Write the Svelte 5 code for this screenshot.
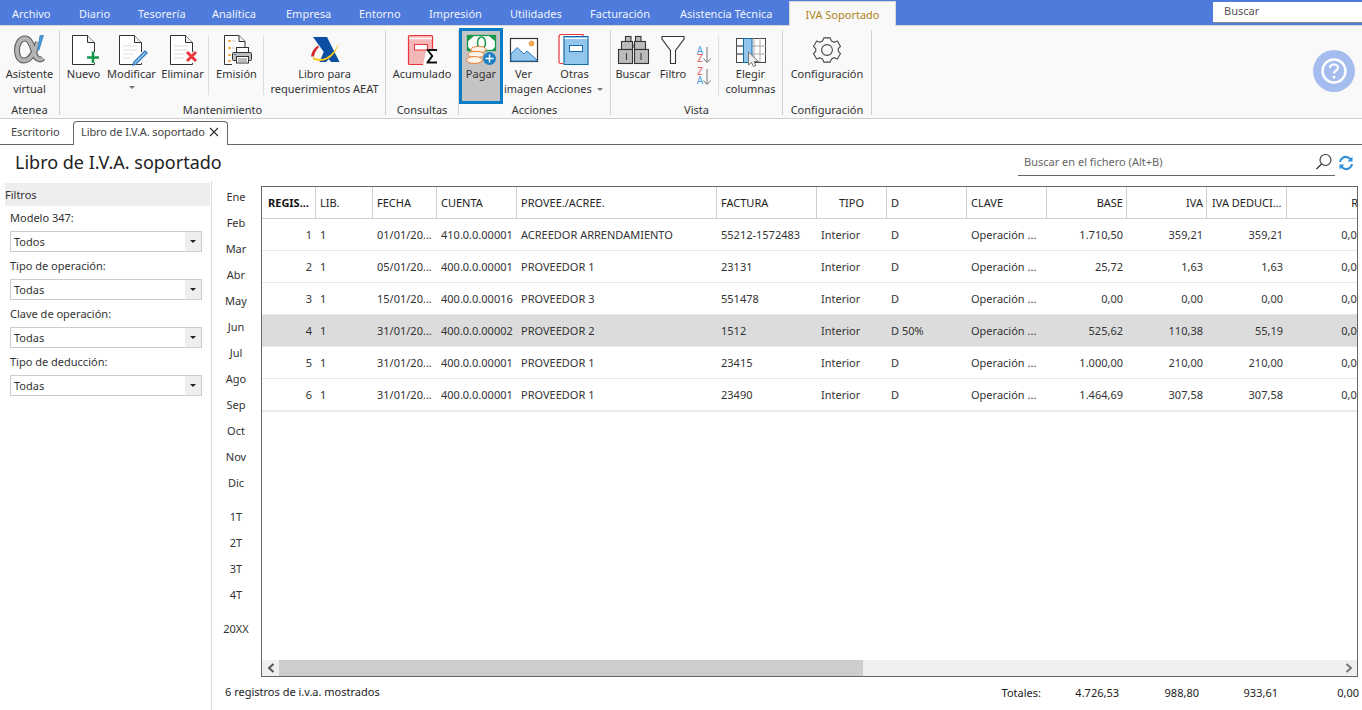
<script>
  const topTabs = [
    ['Archivo', 67], ['Diario', 59], ['Tesorería', 74], ['Analítica', 74], ['Empresa', 73], ['Entorno', 70],
    ['Impresión', 81], ['Utilidades', 80], ['Facturación', 90], ['Asistencia Técnica', 109]
  ];
  const months = ['Ene','Feb','Mar','Abr','May','Jun','Jul','Ago','Sep','Oct','Nov','Dic'];
  const quarters = ['1T','2T','3T','4T'];
  const filters = [['Modelo 347:','Todos'],['Tipo de operación:','Todas'],['Clave de operación:','Todas'],['Tipo de deducción:','Todas']];
  const cols = [
    ['REGIS...','bold'],['LIB.',''],['FECHA',''],['CUENTA',''],['PROVEE./ACREE.',''],['FACTURA',''],['TIPO','center'],
    ['D',''],['CLAVE',''],['BASE','right'],['IVA','right'],['IVA DEDUCI...','ded'],['R','right lastcol']
  ];
  const rows = [
    ['1','1','01/01/20...','410.0.0.00001','ACREEDOR ARRENDAMIENTO','55212-1572483','Interior','D','Operación ...','1.710,50','359,21','359,21','0,00'],
    ['2','1','05/01/20...','400.0.0.00001','PROVEEDOR 1','23131','Interior','D','Operación ...','25,72','1,63','1,63','0,00'],
    ['3','1','15/01/20...','400.0.0.00016','PROVEEDOR 3','551478','Interior','D','Operación ...','0,00','0,00','0,00','0,00'],
    ['4','1','31/01/20...','400.0.0.00002','PROVEEDOR 2','1512','Interior','D 50%','Operación ...','525,62','110,38','55,19','0,00'],
    ['5','1','31/01/20...','400.0.0.00001','PROVEEDOR 1','23415','Interior','D','Operación ...','1.000,00','210,00','210,00','0,00'],
    ['6','1','31/01/20...','400.0.0.00001','PROVEEDOR 1','23490','Interior','D','Operación ...','1.464,69','307,58','307,58','0,00']
  ];
  const numeric = [0, 9, 10, 11, 12];
  const alpha = 'M36 42C33 52 28 60.500 22 60.500C16 60.500 15 54 15 50C15 44 18 38.500 23 38.500C30 38.500 31 52 34 57C36 60 39 60 41 58';
</script>

{#snippet doc(x)}
  <path d="M{x+22} 52V42.500L{x+15} 35.500H{x}V64.500H{x+22}V63" fill="#fff" stroke="#333" stroke-width="1"/>
  <path d="M{x+15} 35.500V42.500H{x+22}" fill="#eee" stroke="#333" stroke-width="1"/>
{/snippet}

<div class="app">
  <header class="menubar">
    {#each topTabs as [label, w]}
      <div class="menutab" style="width:{w}px">{label}</div>
    {/each}
    <div class="menutab active">IVA Soportado</div>
    <div class="globalsearch">Buscar</div>
  </header>

  <section class="ribbon">
    <div class="group g-atenea">
      <div class="items">
        <div class="item w59">
          <svg width="46" height="36" viewBox="5 31 46 36">
            <path d={alpha} fill="none" stroke="#5f5f5f" stroke-width="6"/>
            <path d={alpha} fill="none" stroke="#b4b4b4" stroke-width="3.800"/>
            <path d="M38 35.500H41.500L37 50H35.500Z" fill="#4d9bdc" stroke="#2f7fc0" stroke-width=".7"/>
          </svg>
          <span>Asistente<br/>virtual</span>
        </div>
      </div>
      <div class="grouplabel">Atenea</div>
    </div>

    <div class="group g-mant">
      <div class="items">
        <div class="item w47">
          <svg width="46" height="36" viewBox="60 31 46 36">
            {@render doc(71.5)}
            <path d="M92 51.500V63M86 57.500H98" stroke="#16994a" stroke-width="2.600"/>
          </svg>
          <span>Nuevo</span>
        </div>
        <div class="item w49">
          <svg width="46" height="36" viewBox="108 31 46 36">
            {@render doc(118.500)}
            <path d="M122 46H136M122 50H136M122 54H133M122 58H129" stroke="#ddd"/>
            <path d="M133 62L132 65L135 64L146 53L144 51Z" fill="#9cc8ec" stroke="#2b7cc0" stroke-width="1.300"/>
          </svg>
          <span>Modificar</span>
          <i class="caret"></i>
        </div>
        <div class="item w52 sep">
          <svg width="46" height="36" viewBox="159 31 46 36">
            {@render doc(169.500)}
            <path d="M173 46H187M173 50H187M173 54H183M173 58H183" stroke="#ddd"/>
            <path d="M186 52L195 61M195 52L186 61" stroke="#e8383d" stroke-width="3"/>
          </svg>
          <span>Eliminar</span>
        </div>
        <div class="item w55 sep">
          <svg width="46" height="36" viewBox="214 31 46 36">
            <path d="M245 47V41.500L239 35.500H224.500V64.500H232" fill="#fff" stroke="#333"/>
            <path d="M239 35.500V41.500H245" fill="#eee" stroke="#333"/>
            <path d="M228 41H231M228 48H231M228 55H231M228 61H231" stroke="#f09a28" stroke-width="1.300"/>
            <path d="M232 41H236M232 48H235M232 55H234" stroke="#ccc"/>
            <rect x="236.500" y="47.500" width="12" height="6" fill="#fff" stroke="#333"/>
            <rect x="232.500" y="52.500" width="19" height="8" rx="1" fill="#bcbcbc" stroke="#333"/>
            <rect x="236.500" y="56.500" width="12" height="6.500" fill="#fff" stroke="#333"/>
            <path d="M234 54.500H236" stroke="#2b7cc0"/>
            <path d="M238 59H247M238 61H247" stroke="#555" stroke-width=".8"/>
          </svg>
          <span>Emisión</span>
        </div>
        <div class="item grow">
          <svg width="46" height="36" viewBox="302 31 46 36">
            <path d="M313 37H327L339.500 62H331Z" fill="#0b4ea2"/>
            <path d="M325 49L319.500 62H326L331 57Z" fill="#0b4ea2"/>
            <path d="M313 57C322 62 333 57 338.500 43C337 53 328 65 313 59.500Z" fill="#f5c518"/>
            <path d="M311 56.500C311.500 52 314 48 318 45.500L319 47C316 50 314.500 53 314 56.500Z" fill="#d8232a"/>
          </svg>
          <span>Libro para<br/>requerimientos AEAT</span>
        </div>
      </div>
      <div class="grouplabel">Mantenimiento</div>
    </div>

    <div class="group g-cons">
      <div class="items">
        <div class="item grow">
          <svg width="46" height="36" viewBox="399 31 46 36">
            <rect x="408.500" y="35.500" width="24" height="29" rx="1" fill="#f4b6b6" stroke="#e8343a" stroke-width="1.200"/>
            <path d="M409 38.500H432" stroke="#fff" stroke-width="1.500"/>
            <rect x="414.500" y="44.500" width="13" height="5.500" fill="#fff" stroke="#e8343a"/>
            <path d="M426 51H434V65H423Z" fill="#fff"/>
            <path d="M427 49H437V51H429.500L433.500 56L429.500 61.500H437V63.500H426.500V62L431 56L426.500 50Z" fill="#111"/>
          </svg>
          <span>Acumulado</span>
        </div>
      </div>
      <div class="grouplabel">Consultas</div>
    </div>

    <div class="group g-acc">
      <div class="items">
        <div class="item selected">
          <svg width="38" height="36" viewBox="463 31 38 36">
            <rect x="468.500" y="35.500" width="28" height="15" fill="#fff" stroke="#16994a" stroke-width="1.300"/>
            <path d="M468 36H475L468 42ZM497 36H490L497 42ZM468 51H473L468 46ZM497 51H492L497 46Z" fill="#16994a"/>
            <ellipse cx="482.500" cy="43" rx="4" ry="6" fill="none" stroke="#16994a" stroke-width="1.500"/>
            <ellipse cx="479.500" cy="49.500" rx="7.500" ry="3.200" fill="#fdf3ea" stroke="#ea7f30"/>
            <ellipse cx="477" cy="54.500" rx="8" ry="3.200" fill="#fdf3ea" stroke="#ea7f30"/>
            <ellipse cx="475.500" cy="60" rx="8" ry="3.500" fill="#fdf3ea" stroke="#ea7f30"/>
            <circle cx="490.500" cy="58.500" r="6.500" fill="#1f7fc4"/>
            <path d="M490.500 54.500V62.500M486.500 58.500H494.500" stroke="#fff" stroke-width="1.400"/>
          </svg>
          <span>Pagar</span>
        </div>
        <div class="item w41">
          <svg width="34" height="36" viewBox="506 31 34 36">
            <rect x="509.500" y="38.500" width="27" height="23" fill="#fff" stroke="#333" stroke-width="1.200"/>
            <path d="M510 54L516 47.500L523 54L526 51L536 60V61H510Z" fill="#93c6ec" stroke="#2b7cc0" stroke-width="1"/>
            <circle cx="530.500" cy="43.500" r="2.500" fill="#f3b05a" stroke="#e98a2b" stroke-width=".7"/>
          </svg>
          <span>Ver<br/>imagen</span>
        </div>
        <div class="item w57 otras">
          <svg width="46" height="36" viewBox="552 31 46 36">
            <path d="M561 34.500H583V38M561 34.500C559.500 34.500 559 36 559 37V62C559 63 560 63.500 561 63.500H563" fill="#fff" stroke="#e8343a" stroke-width="1.200"/>
            <path d="M564 36.500H588V64.500H564Z" fill="#93c6ec" stroke="#156ca8" stroke-width="1.200"/>
            <path d="M564.500 38.500H587.500" stroke="#fff" stroke-width="1"/>
            <rect x="569.500" y="45.500" width="13" height="6" fill="#fff" stroke="#156ca8"/>
          </svg>
          <span>Otras<br/>Acciones <i class="caret inline"></i></span>
        </div>
      </div>
      <div class="grouplabel">Acciones</div>
    </div>

    <div class="group g-vista">
      <div class="items">
        <div class="item w44">
          <svg width="40" height="36" viewBox="614 31 40 36">
            <g fill="#bcbcbc" stroke="#333" stroke-width="1.100">
              <rect x="626.500" y="36.500" width="5.500" height="5"/>
              <rect x="636.500" y="36.500" width="5.500" height="5"/>
              <rect x="622.500" y="41.500" width="11" height="8"/>
              <rect x="635.500" y="41.500" width="11" height="8"/>
              <rect x="619.500" y="49.500" width="14" height="14"/>
              <rect x="635.500" y="49.500" width="14" height="14"/>
            </g>
            <path d="M633 45H636M633 47H636" stroke="#333"/>
            <path d="M627.500 53V60M642 53V60" stroke="#333"/>
          </svg>
          <span>Buscar</span>
        </div>
        <div class="item w36">
          <svg width="34" height="36" viewBox="656 31 34 36">
            <path d="M662 36.500H684V39L675.500 50.500V63.500H670.500V50.500L662 39Z" fill="#fff" stroke="#333" stroke-width="1.100"/>
          </svg>
          <span>Filtro</span>
        </div>
        <div class="item sortitem sep">
          <svg width="26" height="46" viewBox="691 40 26 46">
            <text x="699" y="53.500" class="az blue">A</text>
            <text x="699" y="62" class="az red">Z</text>
            <path d="M706 47V62M702.500 58.500L706 62.500L709.500 58.500" fill="none" stroke="#777"/>
            <text x="699" y="75" class="az red">Z</text>
            <text x="699" y="83.500" class="az blue">A</text>
            <path d="M706 69V84M702.500 80.500L706 84.500L709.500 80.500" fill="none" stroke="#777"/>
          </svg>
        </div>
        <div class="item grow">
          <svg width="46" height="36" viewBox="727 31 46 36">
            <rect x="735.500" y="38.500" width="29" height="24" fill="#fff" stroke="#444"/>
            <path d="M735 46H765M735 54H765M759 38V62M753 38V62" stroke="#aaa"/>
            <path d="M735 46H743M735 54H743" stroke="#444"/>
            <rect x="742.500" y="38.500" width="8.500" height="24" fill="#93c6ec" stroke="#156ca8"/>
            <path d="M747.500 52V65L750.500 62.500L752.500 66.500L755 65.500L753 61.500H757.500Z" fill="#eee" stroke="#777"/>
          </svg>
          <span>Elegir<br/>columnas</span>
        </div>
      </div>
      <div class="grouplabel">Vista</div>
    </div>

    <div class="group g-conf">
      <div class="items">
        <div class="item grow">
          <svg width="46" height="36" viewBox="804 31 46 36">
            <g transform="translate(827 50) scale(.9) translate(-827 -51)">
              <path d="M823.500 37.500H830.500L832 41L835 42.500L838.500 41L842 47L839.500 49.500V52.500L842 55L838.500 61L835 59.500L832 61L830.500 64.500H823.500L822 61L819 59.500L815.500 61L812 55L814.500 52.500V49.500L812 47L815.500 41L819 42.500L822 41Z" fill="none" stroke="#444" stroke-width="1.200" stroke-linejoin="round"/>
              <circle cx="827" cy="51" r="6" fill="none" stroke="#444" stroke-width="1.200"/>
            </g>
          </svg>
          <span>Configuración</span>
        </div>
      </div>
      <div class="grouplabel">Configuración</div>
    </div>

    <div class="help">
      <svg width="42" height="42" viewBox="0 0 42 42">
        <circle cx="21" cy="21" r="21" fill="#a5bdee"/>
        <circle cx="21" cy="21" r="11.500" fill="none" stroke="#fff" stroke-width="2.400"/>
        <path d="M17 18C17 15.500 19 14.500 21 14.500C23 14.500 25 15.700 25 18C25 20.500 21 20.800 21 23.500" fill="none" stroke="#fff" stroke-width="2.200"/>
        <circle cx="21" cy="27" r="1.500" fill="#fff"/>
      </svg>
    </div>
  </section>

  <nav class="doctabs">
    <div class="doctab">Escritorio</div>
    <div class="doctab current">
      Libro de I.V.A. soportado
      <svg width="10" height="10" viewBox="0 0 10 10"><path d="M1 1L9 9M9 1L1 9" stroke="#333" stroke-width="1.200"/></svg>
    </div>
  </nav>

  <div class="titlerow">
    <h1>Libro de I.V.A. soportado</h1>
    <div class="filesearch">
      <span>Buscar en el fichero (Alt+B)</span>
      <svg width="18" height="18" viewBox="0 0 18 18"><circle cx="10.500" cy="7" r="5.500" fill="none" stroke="#333" stroke-width="1.100"/><path d="M6.500 11L1.500 16" stroke="#333" stroke-width="1.300"/></svg>
    </div>
    <svg class="refresh" width="16" height="16" viewBox="0 0 16 16">
      <path d="M2 7C2.500 3.500 6 1 9.500 2.200C11 2.700 12 3.600 12.800 4.500M14 9C13.500 12.500 10 15 6.500 13.800C5 13.300 4 12.400 3.200 11.500" fill="none" stroke="#2f8fd8" stroke-width="2"/>
      <path d="M14.500 1.500V6.500H9.500ZM1.500 14.500V9.500H6.500Z" fill="#2f8fd8"/>
    </svg>
  </div>

  <main class="body">
    <aside class="filters">
      <div class="filtershead">Filtros</div>
      {#each filters as [label, value]}
        <div class="flabel">{label}</div>
        <div class="combo">
          <span>{value}</span>
          <b><i></i></b>
        </div>
      {/each}
    </aside>

    <div class="periods">
      <div class="plist">
        {#each months as m}<div>{m}</div>{/each}
      </div>
      <div class="plist q">
        {#each quarters as m}<div>{m}</div>{/each}
      </div>
      <div class="year">20XX</div>
    </div>

    <div class="content">
      <div class="grid">
        <div class="table">
          <div class="tr head">
            {#each cols as [label, kind]}
              <div class="th {kind}">{label}</div>
            {/each}
          </div>
          {#each rows as row, r}
            <div class="tr" class:sel={r === 3} class:last={r === 5}>
              {#each row as value, c}
                <div class="td" class:num={numeric.includes(c)}>{value}</div>
              {/each}
            </div>
          {/each}
        </div>
        <div class="hscroll">
          <div class="arrow">
            <svg width="8" height="10" viewBox="0 0 8 10"><path d="M6.500 1L2 5L6.500 9" fill="none" stroke="#555" stroke-width="2"/></svg>
          </div>
          <div class="thumb"></div>
          <div class="track"></div>
          <div class="arrow">
            <svg width="8" height="10" viewBox="0 0 8 10"><path d="M1.500 1L6 5L1.500 9" fill="none" stroke="#777" stroke-width="2"/></svg>
          </div>
        </div>
      </div>
      <div class="status">
        <div class="count">6 registros de i.v.a. mostrados</div>
        <div class="tot label">Totales:</div>
        <div class="tot v1">4.726,53</div>
        <div class="tot v2">988,80</div>
        <div class="tot v3">933,61</div>
        <div class="tot v4">0,00</div>
      </div>
    </div>
  </main>
</div>

<style>
  :global(body) { margin: 0; background: #fff; }
  .app {
    width: 1362px; height: 710px; overflow: hidden; display: flex; flex-direction: column;
    font-family: "Noto Sans", "Open Sans", sans-serif; font-size: 11px; color: #333;
  }
  .menubar { height: 25px; flex: none; display: flex; background: #4e7bdc; border-bottom: 1px solid #d8d8d8; padding-left: 12px; }
  .menutab { height: 25px; line-height: 28px; color: #fff; opacity: .92; flex: none; white-space: nowrap; }
  .menutab.active {
    width: 107px; margin-top: 1px; height: 25px; line-height: 26px; opacity: 1; text-align: center;
    background: #f9f9f9; color: #b08320; box-sizing: border-box; border: 1px solid #d8d8d8; border-bottom: 0;
  }
  .globalsearch {
    margin: 2px 0 0 auto; width: 149px; height: 21px; background: #fff; box-sizing: border-box;
    border-bottom: 1px solid #888; padding-left: 11px; line-height: 18px; color: #555;
  }

  .ribbon { height: 92px; flex: none; display: flex; background: #f9f9f9; border-bottom: 1px solid #cfcfcf; position: relative; }
  .group { height: 85px; margin-top: 4px; display: flex; flex-direction: column; border-right: 1px solid #d2d2d2; flex: none; box-sizing: border-box; }
  .g-atenea { width: 60px; }
  .g-mant { width: 326px; }
  .g-cons { width: 73px; }
  .g-acc { width: 152px; }
  .g-vista { width: 172px; }
  .g-conf { width: 89px; }
  .items { height: 72px; display: flex; flex: none; }
  .grouplabel { text-align: center; line-height: 14px; margin-top: 1px; color: #333; }
  .item { display: flex; flex-direction: column; align-items: center; text-align: center; line-height: 15px; flex: none; position: relative; }
  .item svg { display: block; flex: none; margin-top: 1px; margin-bottom: -1px; }
  .item span { white-space: nowrap; }
  .grow { flex: 1; }
  .w59 { width: 59px; }
  .w47 { width: 47px; }
  .w49 { width: 49px; }
  .w52 { width: 53px; }
  .w55 { width: 55px; }
  .w41 { width: 41px; }
  .w57 { width: 57px; }
  .w44 { width: 44px; }
  .w36 { width: 36px; }
  .sep::after { content: ""; position: absolute; right: 0; top: 6px; height: 59px; border-right: 1px solid #ddd; }
  .otras { margin-left: 2px; }
  .selected {
    width: 44px; height: 76px; margin-top: -2px; background: #c4c4c4; box-sizing: border-box;
    border: 3px solid #0a7cc4;
  }
  .selected svg { margin-top: 0; }
  .sortitem { width: 28px; }
  .sortitem svg { margin-top: 10px; }
  .az { font-size: 10px; text-anchor: middle; }
  .blue { fill: #4f9ee0; }
  .red { fill: #e8585c; }
  .caret { display: block; width: 0; height: 0; margin-top: 5px; border: 3px solid transparent; border-top: 3px solid #777; border-bottom: 0; }
  .caret.inline { display: inline-block; margin: 0 0 2px 2px; vertical-align: middle; }
  .help { position: absolute; left: 1313px; top: 24px; line-height: 0; }

  .doctabs { height: 26px; flex: none; display: flex; border-bottom: 1px solid #666; box-sizing: border-box; padding-top: 2px; }
  .doctab { width: 73px; padding-left: 11px; box-sizing: border-box; line-height: 22px; color: #444; }
  .current {
    width: 155px; height: 24px; padding: 0 0 4px 7px; background: #fff; border: 1px solid #666; border-bottom: 0;
    border-radius: 4px 4px 0 0; display: flex; align-items: center; gap: 4px; white-space: nowrap; letter-spacing: -.1px;
  }
  .titlerow { height: 36px; flex: none; display: flex; align-items: flex-start; }
  h1 { margin: 3px 0 0 15px; font-size: 18px; font-weight: 400; color: #222; line-height: 28px; }
  .filesearch {
    margin: 3px 0 0 auto; width: 317px; height: 28px; box-sizing: border-box; border-bottom: 1px solid #666;
    display: flex; align-items: center; justify-content: space-between; padding: 0 2px 0 6px; color: #666;
  }
  .refresh { margin: 10px 8px 0 3px; flex: none; }

  .body { flex: 1; display: flex; min-height: 0; }
  .filters { width: 212px; flex: none; box-sizing: border-box; border-right: 1px solid #ddd; padding: 2px 1px 0 5px; }
  .filtershead { height: 23px; line-height: 23px; background: #eee; color: #333; }
  .flabel { margin-left: 5px; line-height: 23px; height: 23px; color: #333; }
  .combo {
    margin: 2px 8px 2px 5px; height: 21px; box-sizing: border-box; border: 1px solid #ccc; background: #fff;
    display: flex; justify-content: space-between; line-height: 19px; padding-left: 3px;
  }
  .combo b { width: 16px; background: #eee; display: flex; align-items: center; justify-content: center; }
  .combo i { width: 0; height: 0; border: 3px solid transparent; border-top: 3px solid #222; border-bottom: 0; }

  .periods { width: 49px; flex: none; text-align: center; color: #333; padding-top: 3px; }
  .plist div { height: 26px; line-height: 26px; width: 48px; }
  .plist.q { margin-top: 8px; }
  .year { margin-top: 8px; height: 26px; line-height: 26px; width: 48px; }

  .content { flex: 1; min-width: 0; display: flex; flex-direction: column; padding-top: 5px; }
  .grid { width: 1097px; height: 491px; box-sizing: border-box; border: 1px solid #666; display: flex; flex-direction: column; overflow: hidden; flex: none; }
  .table { flex: 1; min-height: 0; overflow: hidden; width: 1120px; }
  .tr { display: grid; grid-template-columns: 54px 57px 64px 80px 200px 100px 70px 80px 80px 80px 80px 80px 80px; height: 32px; box-sizing: border-box; border-bottom: 1px solid #e8e8e8; align-items: stretch; }
  .tr.head { border-bottom: 1px solid #cfcfcf; }
  .tr.sel { background: #dcdcdc; }
  .tr.last { border-bottom: 2px solid #eaeaea; height: 33px; }
  .th { border-right: 1px solid #cfcfcf; padding: 0 4px; line-height: 31px; color: #222; white-space: nowrap; overflow: hidden; }
  .th.lastcol { border-right: 0; }
  .th.bold { font-weight: 700; padding-left: 6px; color: #111; }
  .th.center { text-align: center; }
  .th.right { text-align: right; padding-right: 3px; }
  .th.right.lastcol { padding-right: 9px; }
  .th.ded { padding: 0 0 0 5px; }
  .td { padding: 0 4px; line-height: 31px; color: #333; white-space: nowrap; overflow: hidden; }
  .td.num { text-align: right; padding-right: 4px; }
  .hscroll { height: 16px; flex: none; display: flex; background: #efefef; }
  .arrow { width: 17px; flex: none; display: flex; align-items: center; justify-content: center; }
  .thumb { width: 584px; background: #cdcdcd; flex: none; }
  .track { flex: 1; }
  .status { flex: 1; display: flex; align-items: center; padding-bottom: 5px; margin-left: -36px; }
  .count { color: #222; }
  .tot { width: 80px; text-align: right; color: #222; flex: none; box-sizing: border-box; margin-top: 2px; }
  .tot.label { margin-left: auto; width: 60px; }
  .tot.v1 { width: 78px; }
  .tot.v3 { width: 79px; }
  .tot.v4 { width: 81px; margin-right: 3px; }
</style>
